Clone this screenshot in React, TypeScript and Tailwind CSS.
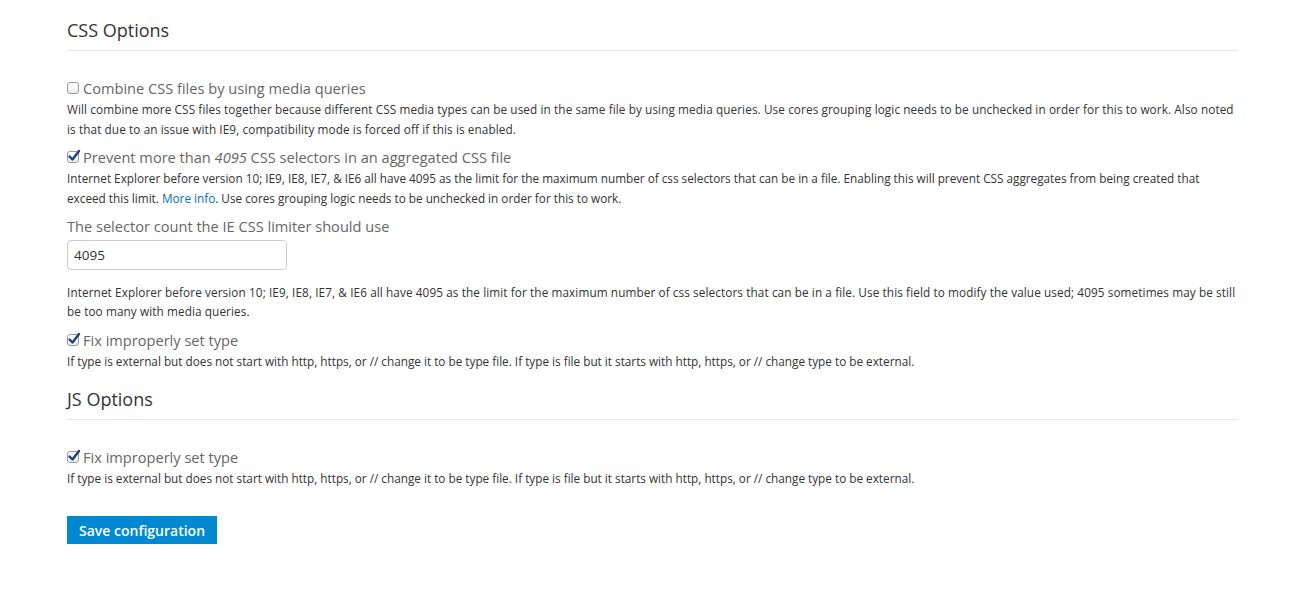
const Check = ({ checked }: { checked: boolean }) => (
    <span className="relative inline-block w-[12px] h-[12px] mr-[4px] rounded-[3px] border border-[#9a9a9a] bg-gradient-to-b from-white to-[#ececec] shrink-0">
        {checked && (
            <svg className="absolute -left-[1px] -top-[3px]" width="14" height="14" viewBox="0 0 14 14">
                <path d="M2.5 7.5 L5.5 10.5 L12 2" fill="none" stroke="#1f3f7a" strokeWidth="2.4" strokeLinecap="round" strokeLinejoin="round" />
            </svg>
        )}
    </span>
)

const CheckItem = ({ checked, label, children, wide }: { checked: boolean; label: React.ReactNode; children: React.ReactNode; wide?: boolean }) => (
    <div className="mb-[7px]">
        <label className="flex items-center text-[14.6px] leading-[22px] text-[#666]">
            <Check checked={checked} />
            <span>{label}</span>
        </label>
        <div className={wide ? "text-[11.75px] leading-[20px] tracking-[0.1px] text-[#333]" : "text-[11.75px] leading-[20px] text-[#333]"}>{children}</div>
    </div>
)

export default function App() {
    return (
        <div className="min-h-screen bg-white font-['Open_Sans',sans-serif] px-[67px] pt-[17px]">
            <div className="w-[1171px]">
                <h2 className="text-[18px] leading-[26px] text-[#333] pb-[7px] border-b border-[#e5e5e5]">CSS Options</h2>
                <div className="pt-[26px]">
                    <CheckItem wide checked={false} label="Combine CSS files by using media queries">
                        Will combine more CSS files together because different CSS media types can be used in the same file by using media queries. Use cores grouping logic needs to be unchecked in order for this to work. Also noted is that due to an issue with IE9, compatibility mode is forced off if this is enabled.
                    </CheckItem>
                    <CheckItem checked={true} label={<>Prevent more than <em>4095</em> CSS selectors in an aggregated CSS file</>}>
                        Internet Explorer before version 10; IE9, IE8, IE7, &amp; IE6 all have 4095 as the limit for the maximum number of css selectors that can be in a file. Enabling this will prevent CSS aggregates from being created that exceed this limit. <a className="text-[#0074bd]" href="#">More info</a>. Use cores grouping logic needs to be unchecked in order for this to work.
                    </CheckItem>
                    <div className="mb-[8px]">
                        <label className="block text-[14.6px] leading-[22px] text-[#666]">The selector count the IE CSS limiter should use</label>
                        <input
                            type="text"
                            defaultValue="4095"
                            className="mt-[3px] w-[220px] h-[30px] px-[6px] text-[13.5px] text-[#333] border border-[#ccc] rounded-[4px] outline-none"
                        />
                        <div className="mt-[13px] text-[11.75px] leading-[19px] tracking-[0.1px] text-[#333]">
                            Internet Explorer before version 10; IE9, IE8, IE7, &amp; IE6 all have 4095 as the limit for the maximum number of css selectors that can be in a file. Use this field to modify the value used; 4095 sometimes may be still be too many with media queries.
                        </div>
                    </div>
                    <CheckItem checked={true} label="Fix improperly set type">
                        If type is external but does not start with http, https, or // change it to be type file. If type is file but it starts with http, https, or // change type to be external.
                    </CheckItem>
                </div>
                <h2 className="mt-[15px] text-[18px] leading-[26px] text-[#333] pb-[7px] border-b border-[#e5e5e5]">JS Options</h2>
                <div className="pt-[26px]">
                    <CheckItem checked={true} label="Fix improperly set type">
                        If type is external but does not start with http, https, or // change it to be type file. If type is file but it starts with http, https, or // change type to be external.
                    </CheckItem>
                </div>
                <button className="mt-[21px] h-[28px] px-[12px] bg-[#0089d0] text-white text-[14px] font-semibold">Save configuration</button>
            </div>
        </div>
    )
}
